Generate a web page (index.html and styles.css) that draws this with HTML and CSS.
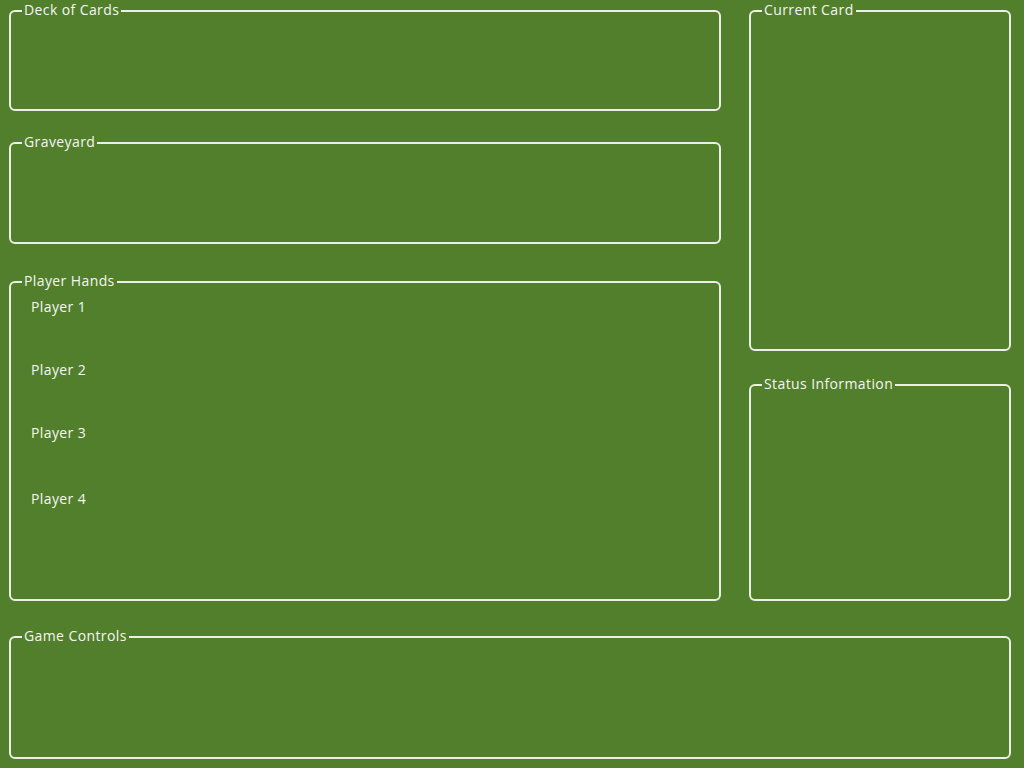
FILE: index.html
```html
<!DOCTYPE html>
<html>
<head>
<meta charset="utf-8">
<title>Card Game</title>
<link rel="stylesheet" href="styles.css">
</head>
<body>
<div class="top">
  <div class="col-left">
    <fieldset class="panel deck">
      <legend>Deck of Cards</legend>
      <div class="body body-deck"></div>
    </fieldset>
    <fieldset class="panel graveyard">
      <legend>Graveyard</legend>
      <div class="body body-grave"></div>
    </fieldset>
    <fieldset class="panel hands">
      <legend>Player Hands</legend>
      <div class="body body-hands">
        <div class="player p1">Player 1</div>
        <div class="player p2">Player 2</div>
        <div class="player p3">Player 3</div>
        <div class="player p4">Player 4</div>
      </div>
    </fieldset>
  </div>
  <div class="col-right">
    <fieldset class="panel current">
      <legend>Current Card</legend>
      <div class="body body-current"></div>
    </fieldset>
    <fieldset class="panel status">
      <legend>Status Information</legend>
      <div class="body body-status"></div>
    </fieldset>
  </div>
</div>
<fieldset class="panel controls">
  <legend>Game Controls</legend>
  <div class="body body-controls"></div>
</fieldset>
</body>
</html>
```
FILE: styles.css
```css
html, body {
  margin: 0;
  background: #517f2c;
}
body {
  padding: 2px 0 0 9px;
  font-family: "Open Sans", "Liberation Sans", sans-serif;
  font-size: 14px;
  letter-spacing: 0.4px;
  color: #f6f6f2;
  width: 1002px;
}
.top {
  display: flex;
  gap: 28px;
}
.col-left {
  width: 712px;
  display: flex;
  flex-direction: column;
}
.col-right {
  width: 262px;
  display: flex;
  flex-direction: column;
}
.panel {
  margin: 0;
  padding: 0 0 0 11px;
  border: 2px solid #ecefe6;
  border-radius: 6px;
  min-width: 0;
}
.panel legend {
  padding: 0 2px 2px 2px;
  line-height: 16px;
  font-size: 14px;
  color: #f6f6f2;
}
.graveyard { margin-top: 23px; }
.hands { margin-top: 29px; }
.status { margin-top: 25px; }
.controls { margin-top: 27px; }
.body-deck { height: 89px; }
.body-grave { height: 90px; }
.body-hands {
  height: 308px;
  padding-top: 6px;
  box-sizing: border-box;
}
.body-current { height: 329px; }
.body-status { height: 205px; }
.body-controls { height: 111px; }
.player {
  padding-left: 9px;
  line-height: 19px;
}
.p1, .p2 { height: 63px; }
.p3 { height: 66px; }
```
